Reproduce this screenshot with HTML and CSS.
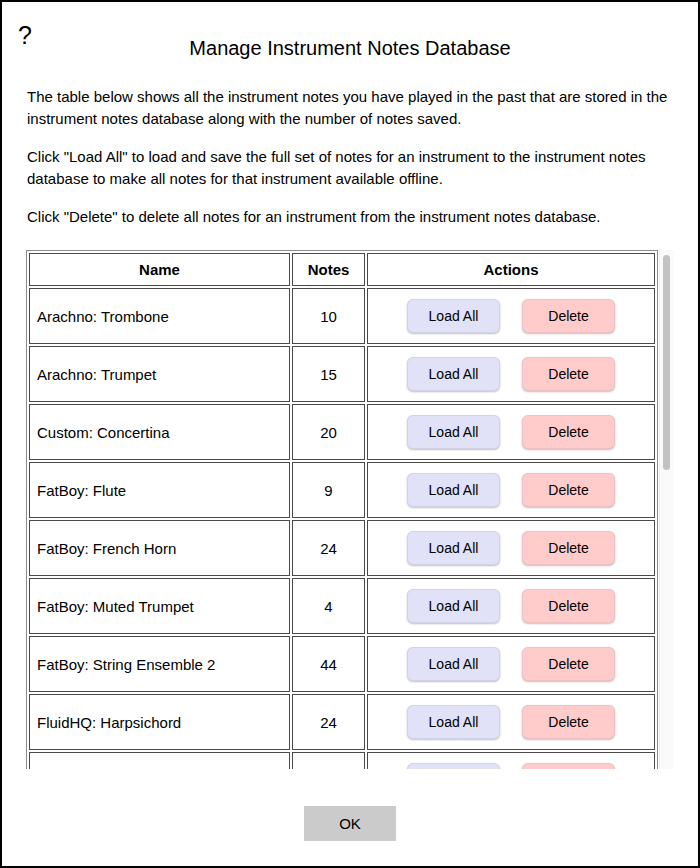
FILE: index.html
```html
<!DOCTYPE html>
<html lang="en">
<head>
<meta charset="utf-8">
<title>Manage Instrument Notes Database</title>
<link rel="stylesheet" href="styles.css">
</head>
<body>
<div class="dialog">
  <span class="help">?</span>
  <h1 class="title">Manage Instrument Notes Database</h1>
  <p class="text">The table below shows all the instrument notes you have played in the past that are stored in the instrument notes database along with the number of notes saved.</p>
  <p class="text">Click "Load All" to load and save the full set of notes for an instrument to the instrument notes database to make all notes for that instrument available offline.</p>
  <p class="text">Click "Delete" to delete all notes for an instrument from the instrument notes database.</p>
  <div class="table-area">
    <div class="scroller">
      <table class="notes">
        <colgroup><col class="c-name"><col class="c-notes"><col class="c-actions"></colgroup>
        <thead>
          <tr><th>Name</th><th>Notes</th><th>Actions</th></tr>
        </thead>
        <tbody>
          <tr><td class="name">Arachno: Trombone</td><td class="num">10</td><td class="acts"><button class="btn load">Load All</button><button class="btn del">Delete</button></td></tr>
          <tr><td class="name">Arachno: Trumpet</td><td class="num">15</td><td class="acts"><button class="btn load">Load All</button><button class="btn del">Delete</button></td></tr>
          <tr><td class="name">Custom: Concertina</td><td class="num">20</td><td class="acts"><button class="btn load">Load All</button><button class="btn del">Delete</button></td></tr>
          <tr><td class="name">FatBoy: Flute</td><td class="num">9</td><td class="acts"><button class="btn load">Load All</button><button class="btn del">Delete</button></td></tr>
          <tr><td class="name">FatBoy: French Horn</td><td class="num">24</td><td class="acts"><button class="btn load">Load All</button><button class="btn del">Delete</button></td></tr>
          <tr><td class="name">FatBoy: Muted Trumpet</td><td class="num">4</td><td class="acts"><button class="btn load">Load All</button><button class="btn del">Delete</button></td></tr>
          <tr><td class="name">FatBoy: String Ensemble 2</td><td class="num">44</td><td class="acts"><button class="btn load">Load All</button><button class="btn del">Delete</button></td></tr>
          <tr><td class="name">FluidHQ: Harpsichord</td><td class="num">24</td><td class="acts"><button class="btn load">Load All</button><button class="btn del">Delete</button></td></tr>
          <tr><td class="name">FluidHQ: Pan Flute</td><td class="num">12</td><td class="acts"><button class="btn load">Load All</button><button class="btn del">Delete</button></td></tr>
          <tr><td class="name">FluidR3: Acoustic Grand Piano</td><td class="num">36</td><td class="acts"><button class="btn load">Load All</button><button class="btn del">Delete</button></td></tr>
          <tr><td class="name">FluidR3: Cello</td><td class="num">18</td><td class="acts"><button class="btn load">Load All</button><button class="btn del">Delete</button></td></tr>
          <tr><td class="name">FluidR3: Clarinet</td><td class="num">14</td><td class="acts"><button class="btn load">Load All</button><button class="btn del">Delete</button></td></tr>
          <tr><td class="name">FluidR3: Electric Bass (finger)</td><td class="num">22</td><td class="acts"><button class="btn load">Load All</button><button class="btn del">Delete</button></td></tr>
          <tr><td class="name">FluidR3: Marimba</td><td class="num">16</td><td class="acts"><button class="btn load">Load All</button><button class="btn del">Delete</button></td></tr>
          <tr><td class="name">FluidR3: Oboe</td><td class="num">11</td><td class="acts"><button class="btn load">Load All</button><button class="btn del">Delete</button></td></tr>
          <tr><td class="name">FluidR3: Violin</td><td class="num">28</td><td class="acts"><button class="btn load">Load All</button><button class="btn del">Delete</button></td></tr>
          <tr><td class="name">MusyngKite: Bassoon</td><td class="num">8</td><td class="acts"><button class="btn load">Load All</button><button class="btn del">Delete</button></td></tr>
          <tr><td class="name">MusyngKite: Church Organ</td><td class="num">30</td><td class="acts"><button class="btn load">Load All</button><button class="btn del">Delete</button></td></tr>
          <tr><td class="name">MusyngKite: Tuba</td><td class="num">6</td><td class="acts"><button class="btn load">Load All</button><button class="btn del">Delete</button></td></tr>
          <tr><td class="name">Salamander: Grand Piano</td><td class="num">40</td><td class="acts"><button class="btn load">Load All</button><button class="btn del">Delete</button></td></tr>
          <tr><td class="name">Salamander: Harp</td><td class="num">13</td><td class="acts"><button class="btn load">Load All</button><button class="btn del">Delete</button></td></tr>
        </tbody>
      </table>
    </div>
    <div class="scroll-track" aria-hidden="true"><div class="scroll-thumb"></div></div>
  </div>
  <div class="footer">
    <button class="ok">OK</button>
  </div>
</div>
</body>
</html>
```

FILE: styles.css
```css
html, body {
  margin: 0;
  padding: 0;
  background: #fff;
}

body {
  font-family: "Liberation Sans", Arial, Helvetica, sans-serif;
  color: #000;
}

.dialog {
  position: relative;
  box-sizing: border-box;
  height: 868px;
  border: 2px solid #000;
  padding: 0 24px;
  display: flex;
  flex-direction: column;
}

.help {
  position: absolute;
  left: 16px;
  top: 18px;
  font-size: 25px;
  line-height: 30px;
}

.title {
  margin: 35px 0 26px;
  font-size: 20px;
  line-height: 23px;
  font-weight: normal;
  text-align: center;
}

.text {
  margin: 0 0 16px 1px;
  font-size: 15px;
  line-height: 22px;
}

.text:last-of-type {
  margin-bottom: 22px;
}

.table-area {
  position: relative;
  flex: 1;
  min-height: 0;
  display: flex;
}

.scroller {
  flex: 1;
  overflow-y: auto;
  scrollbar-width: none;
}

.scroller::-webkit-scrollbar {
  display: none;
}

.scroll-track {
  position: absolute;
  top: 0;
  right: 0;
  bottom: 0;
  width: 14px;
  background: #fafafa;
  border-left: 1px solid #f0f0f0;
}

.scroll-thumb {
  position: absolute;
  top: 5px;
  left: 3px;
  width: 7px;
  height: 215px;
  border-radius: 4px;
  background: #c2c2c2;
}

.notes {
  width: 632px;
  table-layout: fixed;
  border-collapse: separate;
  border-spacing: 2px;
  border: 1px solid #8c8c8c;
  font-size: 15px;
}

.c-name { width: 261px; }
.c-notes { width: 73px; }

.notes th,
.notes td {
  border: 1px solid #4a4a4a;
}

.notes th {
  padding: 7px 7px;
  line-height: 17px;
  font-weight: bold;
  text-align: center;
}

.notes td {
  padding: 10px 7px;
  line-height: 17px;
}

.notes .num {
  text-align: center;
}

.notes .acts {
  text-align: center;
  white-space: nowrap;
}

.btn {
  width: 93px;
  height: 34px;
  margin: 0 11px;
  border: 1px solid rgba(0, 0, 0, 0.06);
  border-radius: 6px;
  font-family: "Liberation Sans", Arial, sans-serif;
  font-size: 14px;
  color: #000;
  box-shadow: 0 1px 2px rgba(0, 0, 0, 0.25);
  vertical-align: middle;
}

.load {
  background: #e1e1f7;
}

.del {
  background: #ffcbcb;
}

.footer {
  display: flex;
  justify-content: center;
  padding: 37px 0 25px;
}

.ok {
  width: 92px;
  height: 35px;
  border: none;
  border-radius: 0;
  background: #cbcbcb;
  font-family: "Liberation Sans", Arial, sans-serif;
  font-size: 15px;
  color: #000;
}
```
